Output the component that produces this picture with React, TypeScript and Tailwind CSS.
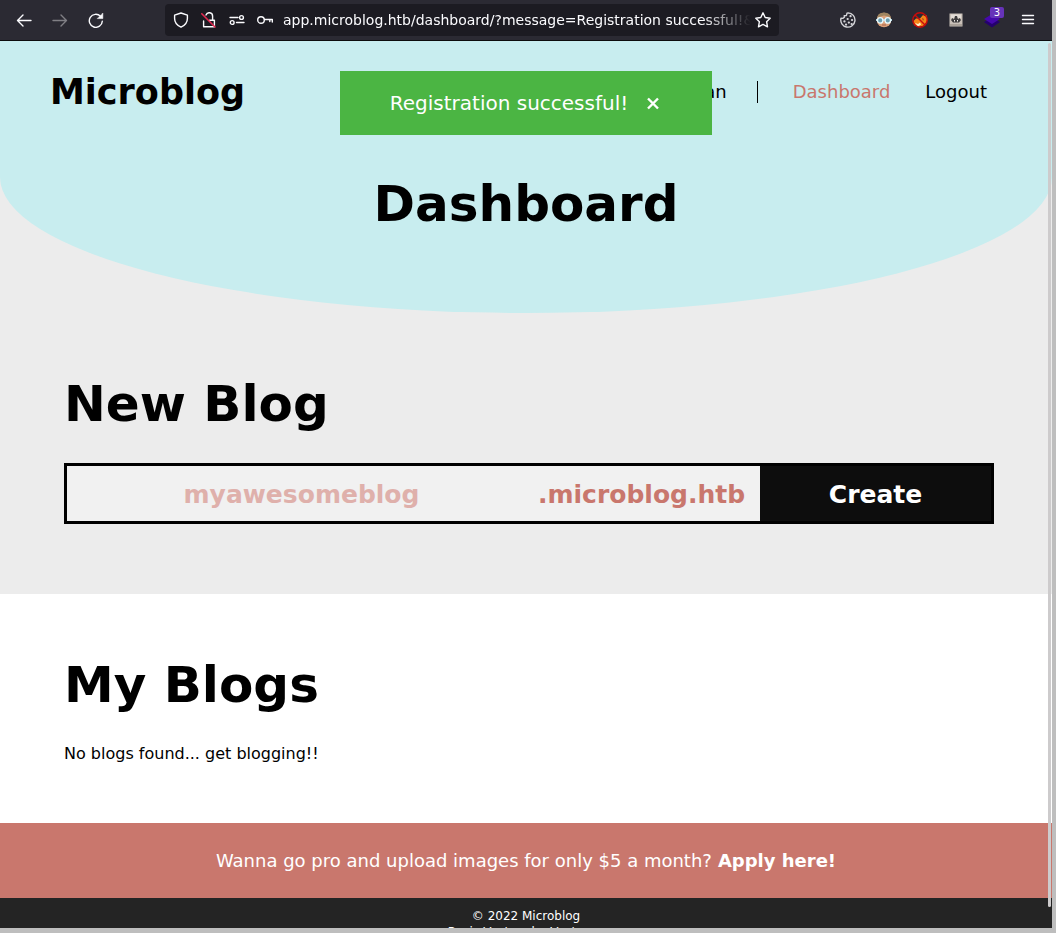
import React from "react";

type IconProps = { children: React.ReactNode; className?: string };

function Icon({ children, className = "" }: IconProps) {
  return (
    <svg viewBox="0 0 16 16" aria-hidden="true" fill="none" stroke="currentColor" strokeWidth="1.4" strokeLinecap="round" strokeLinejoin="round" className={`size-4 shrink-0 ${className}`}>
      {children}
    </svg>
  );
}

function Toolbar() {
  return (
    <div className="flex h-10 shrink-0 items-center bg-[#2b2a33] text-[#fbfbfe]">
      <div className="flex w-[165px] shrink-0 items-center gap-5 pl-4">
        <button aria-label="Back"><Icon><path d="M15 8.5H1.5M7 3L1.5 8.5L7 14" /></Icon></button>
        <button aria-label="Forward" className="text-[#807f85]"><Icon><path d="M1 8.5H14.5M9 3L14.5 8.5L9 14" /></Icon></button>
        <button aria-label="Reload">
          <Icon>
            <path d="M14.3 9.2A6.5 6.5 0 1 1 12.5 4.3" />
            <path d="M14.8 1.4V6.6H9.6Z" fill="currentColor" strokeWidth="0.6" />
          </Icon>
        </button>
      </div>
      <div className="flex h-8 min-w-0 flex-1 items-center gap-3 rounded bg-[#1c1b22] px-2">
        <button aria-label="Tracking protection"><Icon><path d="M8 1L14.4 3.2V6.5C14.4 10.8 11.5 13.6 8 15.2C4.5 13.6 1.6 10.8 1.6 6.5V3.2Z" /></Icon></button>
        <button aria-label="Connection not secure">
          <Icon>
            <path d="M2.6 9V14.8H13.4V8.2H11.6V4.2A3.4 3.4 0 0 0 5 3M8.5 8.2H13.4" />
            <path d="M0.8 1.8L14 15" stroke="#e22850" strokeWidth="1.6" />
          </Icon>
        </button>
        <button aria-label="Permissions">
          <Icon>
            <path d="M1 5.5H9M7.5 10.5H15" />
            <circle cx="12.5" cy="5.5" r="1.9" /><circle cx="3.2" cy="10.5" r="1.9" />
          </Icon>
        </button>
        <button aria-label="Saved login"><Icon><circle cx="4" cy="8" r="3.3" /><path d="M7.5 7.5H15.3V10M12.8 7.5V9.5" /></Icon></button>
        <input
          aria-label="Address"
          readOnly
          value="app.microblog.htb/dashboard/?message=Registration successful!&status=success"
          className="-ml-0.5 min-w-0 flex-1 bg-transparent text-sm text-[#fbfbfe] outline-none [mask-image:linear-gradient(to_left,transparent,black_48px)]"
        />
        <button aria-label="Bookmark this page" className="-ml-2"><Icon><path d="M8 0.8L10.2 5.5L15.2 6.2L11.6 9.7L12.5 14.8L8 12.4L3.5 14.8L4.4 9.7L0.8 6.2L5.8 5.5Z" /></Icon></button>
      </div>
      <div className="flex w-[273px] shrink-0 items-center justify-end gap-5 pr-4">
        <button aria-label="Cookie editor" className="text-[#d5d5d9]">
          <Icon>
            <path d="M8.2 0.9A7.1 7.1 0 1 1 1 6.2L2.8 6.4L4.4 5.2L4.2 3.8L6.4 3.6L7 1.2Z" />
            <path d="M10.5 4.2h.1M7.6 7h.1M12 8h.1M4.4 9.4h.1M8.8 10.6h.1M6 12.6h.1M11.6 12h.1" strokeWidth="2.2" />
          </Icon>
        </button>
        <button aria-label="User agent switcher">
          <svg viewBox="0 0 16 16" className="size-4" aria-hidden="true">
            <circle cx="8" cy="8" r="7.3" fill="#dba079" />
            <path d="M0.8 7Q1.5 .6 8 .6T15.200 7L12.5 4.500L8 3.500L3 5Z" fill="#a08560" />
            <path d="M0 7H16V9H0Z" fill="#b5dbe6" />
            <circle cx="4.2" cy="8.4" r="2.7" fill="#6c9eaf" stroke="#e8f8fc" strokeWidth="1.3" />
            <circle cx="11.8" cy="8.4" r="2.7" fill="#6c9eaf" stroke="#e8f8fc" strokeWidth="1.3" />
            <path d="M6 13H10" stroke="#a5604d" />
          </svg>
        </button>
        <button aria-label="FoxyProxy disabled">
          <svg viewBox="0 0 16 16" className="size-4" aria-hidden="true">
            <path d="M1.500 9L4 6.500L8 6.500L11 3L12.500 4L15 3.500L15.200 9L12 13.500L6 15L2 13Z" fill="#f58618" />
            <path d="M3 11L6 12L8 10.500L9 12.500L6 14.500Z" fill="#fff0cf" />
            <path d="M10 6L12 7L11 9Z" fill="#a54618" />
            <circle cx="8" cy="8" r="7.2" fill="none" stroke="#c90b0b" strokeWidth="1.4" />
            <path d="M3 3L13 13" stroke="#c90b0b" strokeWidth="1.4" />
          </svg>
        </button>
        <button aria-label="Extension">
          <svg viewBox="0 0 16 16" className="size-4" aria-hidden="true">
            <path d="M1.500 1.500H14.500V14.500H1.500Z" fill="#c9c0b8" />
            <path d="M3 2.500H13V6H3Z" fill="#e2dcd6" />
            <path d="M3 8L4.500 6L6 7.500L7 4H9L10 7.500L11.500 6L13 8L11 10.500H5Z" fill="#3c3a3c" />
            <path d="M6 8H7V9.500H6ZM9 8H10V9.500H9Z" fill="#f0ece8" />
            <path d="M2 12H14V14H2Z" fill="#aaa199" />
          </svg>
        </button>
        <button aria-label="Wappalyzer, 3 technologies" className="relative">
          <svg viewBox="0 0 16 16" className="size-4" aria-hidden="true">
            <path d="M0 10L8 15.500L16 10L8 5Z" fill="#25006f" /><path d="M0 7L8 12L16 7L8 2Z" fill="#4608ad" />
          </svg>
          <span className="absolute -top-[5px] left-1.5 flex h-[11px] w-3.5 items-center justify-center rounded-xs bg-[#6633b9] text-[10px] leading-none text-white">3</span>
        </button>
        <button aria-label="Open application menu"><Icon><path d="M2.500 3.500H13.500M2.500 7.500H13.500M2.500 11.500H13.500" /></Icon></button>
      </div>
    </div>
  );
}

export default function App() {
  return (
    <div className="h-screen bg-[#bebebe] pr-1 pb-[5px] font-['DejaVu_Sans',sans-serif] text-black">
      <div className="relative flex h-full flex-col overflow-hidden bg-white">
        <Toolbar />
        <div className="relative flex min-h-0 flex-1 flex-col overflow-hidden border-t border-[#0c0c0d] bg-white">
          <main className="shrink-0">
            <div className="bg-[#ececec] pb-[70px]">
              <header className="h-[272px] rounded-b-[50%] bg-[#c8edef] pt-[27px]">
                <nav className="flex h-12 items-center justify-between pr-[65px] pl-[50px] text-lg">
                  <a href="#home" className="text-[35px] leading-none font-bold">Microblog</a>
                  <div className="flex items-center">
                    <span>an</span>
                    <span className="mr-[35px] ml-[30px] h-[22px] w-px bg-black" />
                    <a href="#dashboard" className="mr-[35px] text-[#c9776d]">Dashboard</a>
                    <a href="#logout">Logout</a>
                  </div>
                </nav>
                <h1 className="mt-[58px] text-center text-[50px] leading-[60px] font-bold">Dashboard</h1>
              </header>
              <section className="px-[64px] pt-[61px]">
                <h2 className="text-[50px] leading-[60px] font-bold">New Blog</h2>
                <form className="mt-[29px] mr-[-6px] flex h-[61px] border-3 border-black bg-[#f1f1f1] text-[25px] font-bold" onSubmit={(e) => e.preventDefault()}>
                  <input aria-label="Blog name" placeholder="myawesomeblog" className="min-w-0 flex-1 bg-transparent pt-0.5 pr-0.5 text-center text-[#c9776d] outline-none placeholder:text-[#dfb0ab]" />
                  <span className="flex w-[222px] shrink-0 items-center pt-0.5 pr-4 text-[#c9776d]">.microblog.htb</span>
                  <button className="w-1/4 bg-[#0d0d0d] pt-0.5 text-white">Create</button>
                </form>
              </section>
            </div>
            <section className="px-[64px] pt-[61px] pb-[57px]">
              <h2 className="text-[50px] leading-[60px] font-bold">My Blogs</h2>
              <p className="mt-[27px] text-base">No blogs found... get blogging!!</p>
            </section>
            <p className="flex h-[75px] items-center justify-center gap-1.5 bg-[#c9776d] text-lg text-white">
              Wanna go pro and upload images for only $5 a month? <a href="#apply" className="font-bold">Apply here!</a>
            </p>
          </main>
          <footer className="shrink-0 bg-[#242424] pt-2.5 pb-3 text-center text-xs leading-4 text-white">
            <p>© 2022 Microblog</p>
            <p>Basic Vectors by Vecteezy</p>
          </footer>
          <div role="alert" className="absolute top-[30px] left-1/2 flex h-16 w-[372px] -translate-x-1/2 items-center justify-center gap-[18px] bg-[#4bb543] pr-0.5 text-xl text-white">
            <span>Registration successful!</span>
            <button aria-label="Dismiss"><svg viewBox="0 0 14 14" className="size-3.5" aria-hidden="true"><path d="M2 2.500L12 12.500M12 2.500L2 12.500" stroke="currentColor" strokeWidth="2.4" /></svg></button>
          </div>
          <div className="absolute top-0.5 right-px h-[864px] w-[3px] rounded-full bg-[#cdcbcc]" />
        </div>
      </div>
    </div>
  );
}
